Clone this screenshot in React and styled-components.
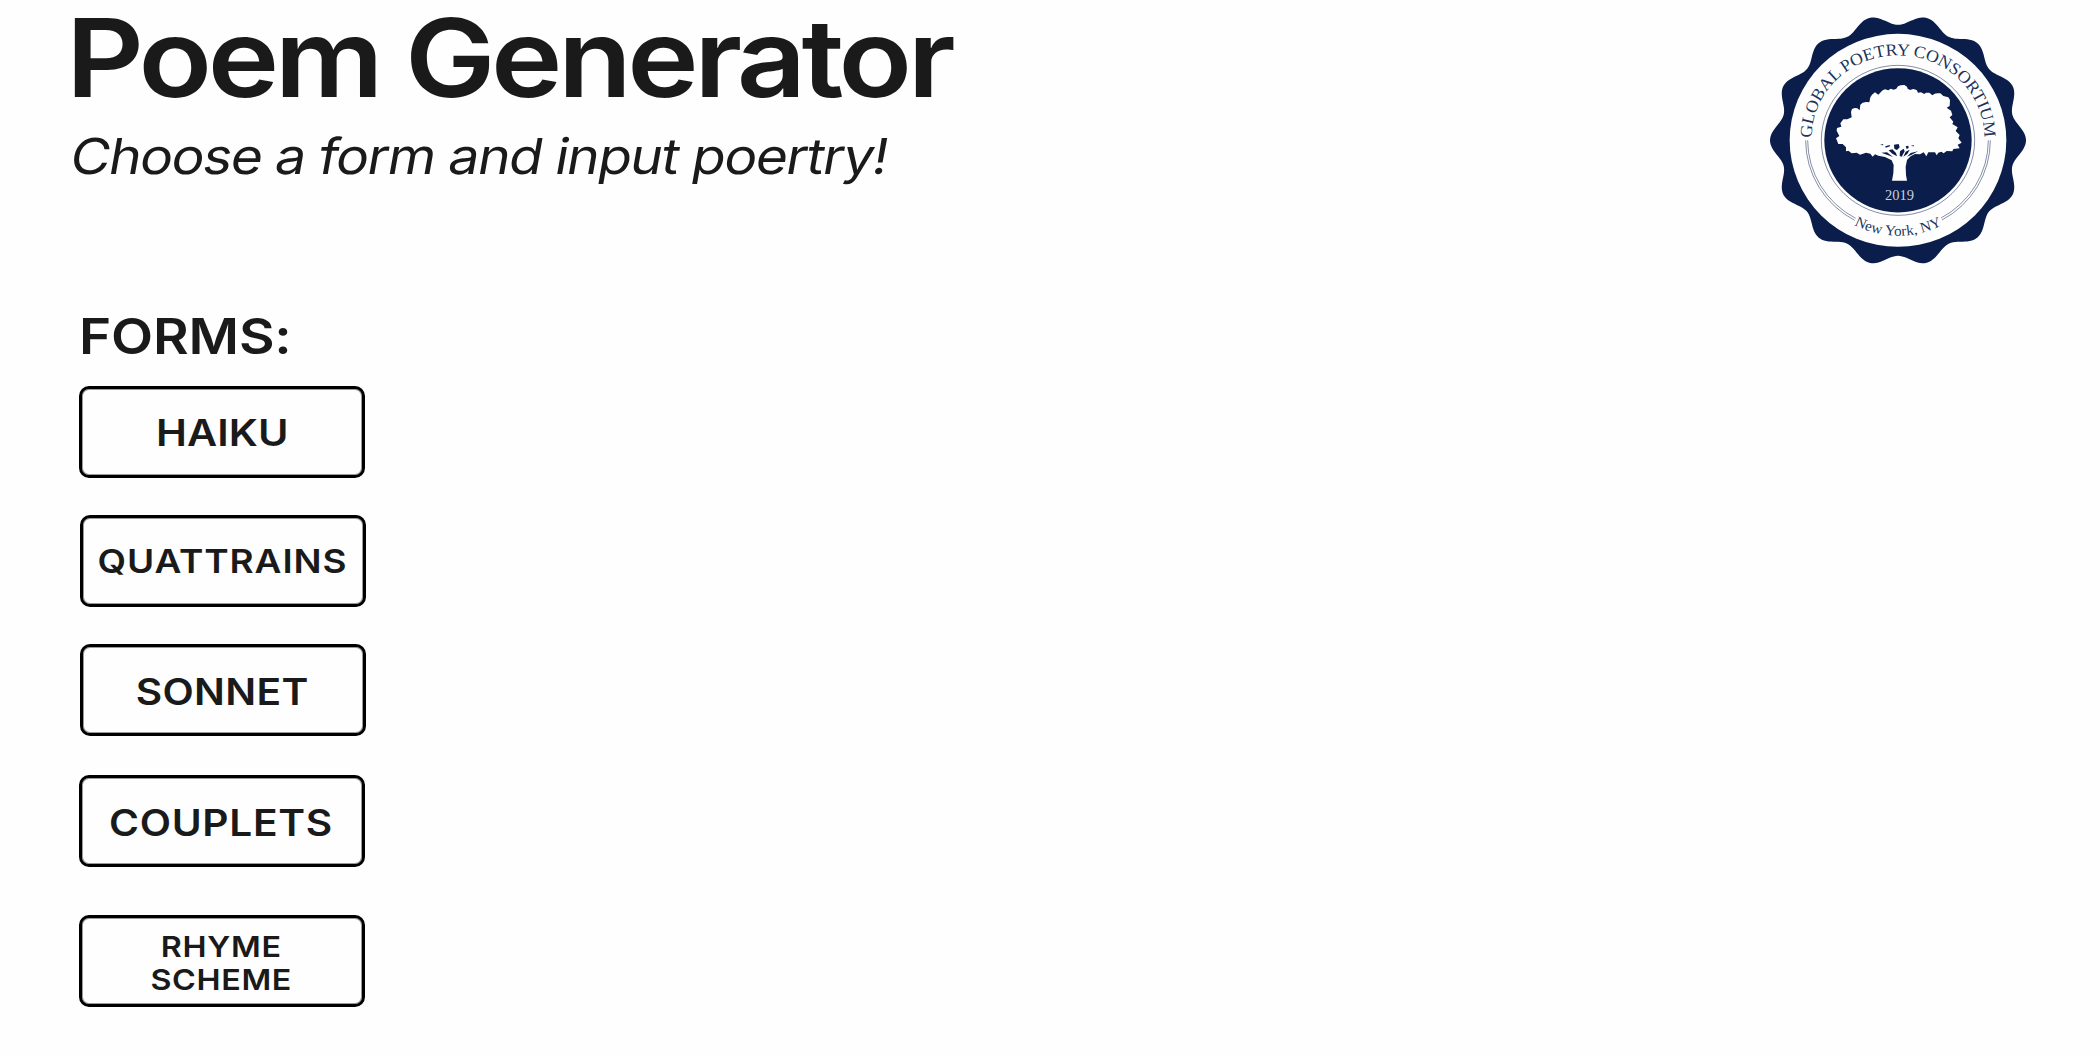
import React from 'react';
import styled, { createGlobalStyle } from 'styled-components';

const GlobalStyle = createGlobalStyle`
  * { box-sizing: border-box; }
  body { margin: 0; background: #fefefe; color: #1a1a1a; font-family: Inter, "Liberation Sans", sans-serif; }
`;

const Page = styled.main`
  min-height: 1056px;
  padding: 3px 74px 0 66px;
`;

const Header = styled.header`
  display: flex;
  justify-content: space-between;
  align-items: flex-start;
  height: 304px;
`;

const Heading = styled.div`
  white-space: nowrap;
`;

const Title = styled.h1`
  margin: 0;
  font-size: 108.8px;
  font-weight: 600;
  line-height: 110px;
  letter-spacing: -4px;
  transform: scaleX(1.11);
  transform-origin: left;
`;

const Subtitle = styled.p`
  margin: 13px 0 0 2px;
  font-size: 49.5px;
  line-height: 60px;
  letter-spacing: -1.28px;
  transform: scaleX(1.11) skewX(-9deg);
  transform-origin: left 48px;
`;

const Seal = styled.svg`
  width: 280px;
  height: 260px;
  margin: 7px -14px 0 0;
  flex: none;
`;

const Forms = styled.section`
  display: flex;
  flex-direction: column;
  align-items: flex-start;
  padding-left: 13px;
`;

const FormsLabel = styled.h2`
  margin: 0 0 19px;
  font-size: 49px;
  font-weight: 600;
  line-height: 60px;
  letter-spacing: -0.15px;
  font-feature-settings: 'calt' 0;
  transform: scaleX(1.118);
  transform-origin: left;
`;

const FormButton = styled.button`
  display: flex;
  align-items: center;
  justify-content: center;
  width: 286px;
  height: 92px;
  margin: 0 0 ${(p) => p.$gap}px ${(p) => p.$indent || 0}px;
  padding: ${(p) => p.$drop || 0}px 0 0;
  border: 3px solid #000;
  border-radius: 10px;
  box-shadow: inset 0 0 0 1px #9a9a9a;
  background: transparent;
  color: inherit;
  font: 600 ${(p) => p.$size}px/33px Inter, "Liberation Sans", sans-serif;
`;

const ButtonText = styled.span`
  white-space: pre;
  letter-spacing: ${(p) => p.$tracking}px;
  margin-right: ${(p) => p.$shift || 0}px;
  transform: scaleX(1.12);
`;

const FORMS = [
  { label: 'HAIKU', size: 37, gap: 37, tracking: 0.1 },
  { label: 'QUATTRAINS', size: 33, gap: 37, indent: 1, tracking: 0.8 },
  { label: 'SONNET', size: 36.3, gap: 39, indent: 1, tracking: 0.3, drop: 4, shift: 1 },
  { label: 'COUPLETS', size: 36.3, gap: 48, tracking: 0.65, drop: 4, shift: 1 },
  { label: 'RHYME\nSCHEME', size: 28.8, gap: 0, tracking: 0.6, drop: 4, shift: 2 },
];

const NAVY = '#0a1d4b';
const CX = 414;
const CY = 391;

const scallop = Array.from({ length: 361 }, (_, i) => {
  const a = (i * Math.PI) / 180;
  const r = (0.959 + 0.041 * Math.cos(14 * a)) * (1 - 0.01 * Math.sin(2 * a) ** 2);
  return `${(CX + 384 * r * Math.cos(a)).toFixed(1)},${(CY + 377.6 * r * Math.sin(a)).toFixed(1)}`;
}).join(' ');

const TREE =
  'M228 385L238 378L230 362L231 354L244 350L241 340L250 328L262 328L275 322L273 306L276 297L284 294L292 295L299 301L301 284L308 278L318 276L328 277L331 262L336 254L345 247L355 254L362 247L368 241L375 238L385 241L392 236L401 239L409 236L414 229L422 226L433 225L441 230L443 236L450 240L460 237L470 240L474 248L483 247L493 252L498 248L508 248L517 256L524 251L532 250L541 250L550 258L565 262L570 270L569 288L560 293L573 302L577 315L569 322L580 335L577 342L593 352L587 363L599 375L595 385L605 398L593 404L599 415L580 417L577 424L560 423L551 430L544 425L535 428L530 436L525 427L505 427L499 439L491 427L480 433L465 432L452 439L441 450L437 470L438 495L441 512L396 512L400 490L401 465L395 451L375 441L355 437L345 433L338 440L331 431L318 428L300 434L290 428L275 430L265 422L258 424L258 412L248 402L235 402Z';

const BRANCH_GAPS =
  'M402 404L416 402L419 412L411 420L403 416ZM386 421L397 418L408 429L411 439L397 431ZM364 428L381 427L399 441L385 436ZM420 424L431 416L434 424L425 440L419 438ZM437 425L449 419L442 432L430 440ZM437 409L445 407L446 414L440 417ZM376 409L389 405L390 409L377 413ZM452 429L474 424L455 434L441 440ZM360 405L370 402L369 406ZM452 408L462 405L461 409Z';

const Crest = () => (
  <Seal viewBox="0 0 840 780" preserveAspectRatio="none" role="img">
    <defs>
      <path id="arc-top" d="M155 384A259 248 0 0 1 673 384V392" />
      <path id="arc-bottom" d="M282 645A289 286 0 0 0 548 645" />
    </defs>
    <polygon points={scallop} fill={NAVY} />
    <ellipse cx={CX} cy={CY} rx="325" ry="319.5" fill="#fefefe" />
    <g fill="none" stroke={NAVY} strokeWidth="2" strokeOpacity="0.75">
      <ellipse cx={CX} cy={CY} rx="230" ry="225" />
      <path d="M137 391A277 272 0 0 0 284 631" />
      <path d="M143 391A271 266 0 0 0 287 625" />
      <path d="M691 391A277 272 0 0 1 546 630" />
      <path d="M685 391A271 266 0 0 1 543 624" />
    </g>
    <ellipse cx={CX} cy={CY} rx="221" ry="216.5" fill={NAVY} />
    <path d={TREE} fill="#fefefe" />
    <path d={BRANCH_GAPS} fill={NAVY} />
    <g fontFamily='"Liberation Serif", serif' fill={NAVY} fillOpacity="0.92">
      <text fontSize="51" wordSpacing="-2">
        <textPath href="#arc-top" textLength="795" lengthAdjust="spacingAndGlyphs">GLOBAL POETRY CONSORTIUM</textPath>
      </text>
      <text fontSize="44">
        <textPath href="#arc-bottom" textLength="275" lengthAdjust="spacingAndGlyphs">New York, NY</textPath>
      </text>
      <text x="375" y="570" fontSize="43" fill="#dfe1e8" textLength="87" lengthAdjust="spacingAndGlyphs">2019</text>
    </g>
  </Seal>
);

export default function App() {
  return (
    <Page>
      <GlobalStyle />
      <Header>
        <Heading>
          <Title>Poem Generator</Title>
          <Subtitle>Choose a form and input poertry!</Subtitle>
        </Heading>
        <Crest />
      </Header>
      <Forms>
        <FormsLabel>FORMS:</FormsLabel>
        {FORMS.map((f) => (
          <FormButton key={f.label} $size={f.size} $gap={f.gap} $indent={f.indent} $drop={f.drop}>
            <ButtonText $tracking={f.tracking} $shift={f.shift}>{f.label}</ButtonText>
          </FormButton>
        ))}
      </Forms>
    </Page>
  );
}
